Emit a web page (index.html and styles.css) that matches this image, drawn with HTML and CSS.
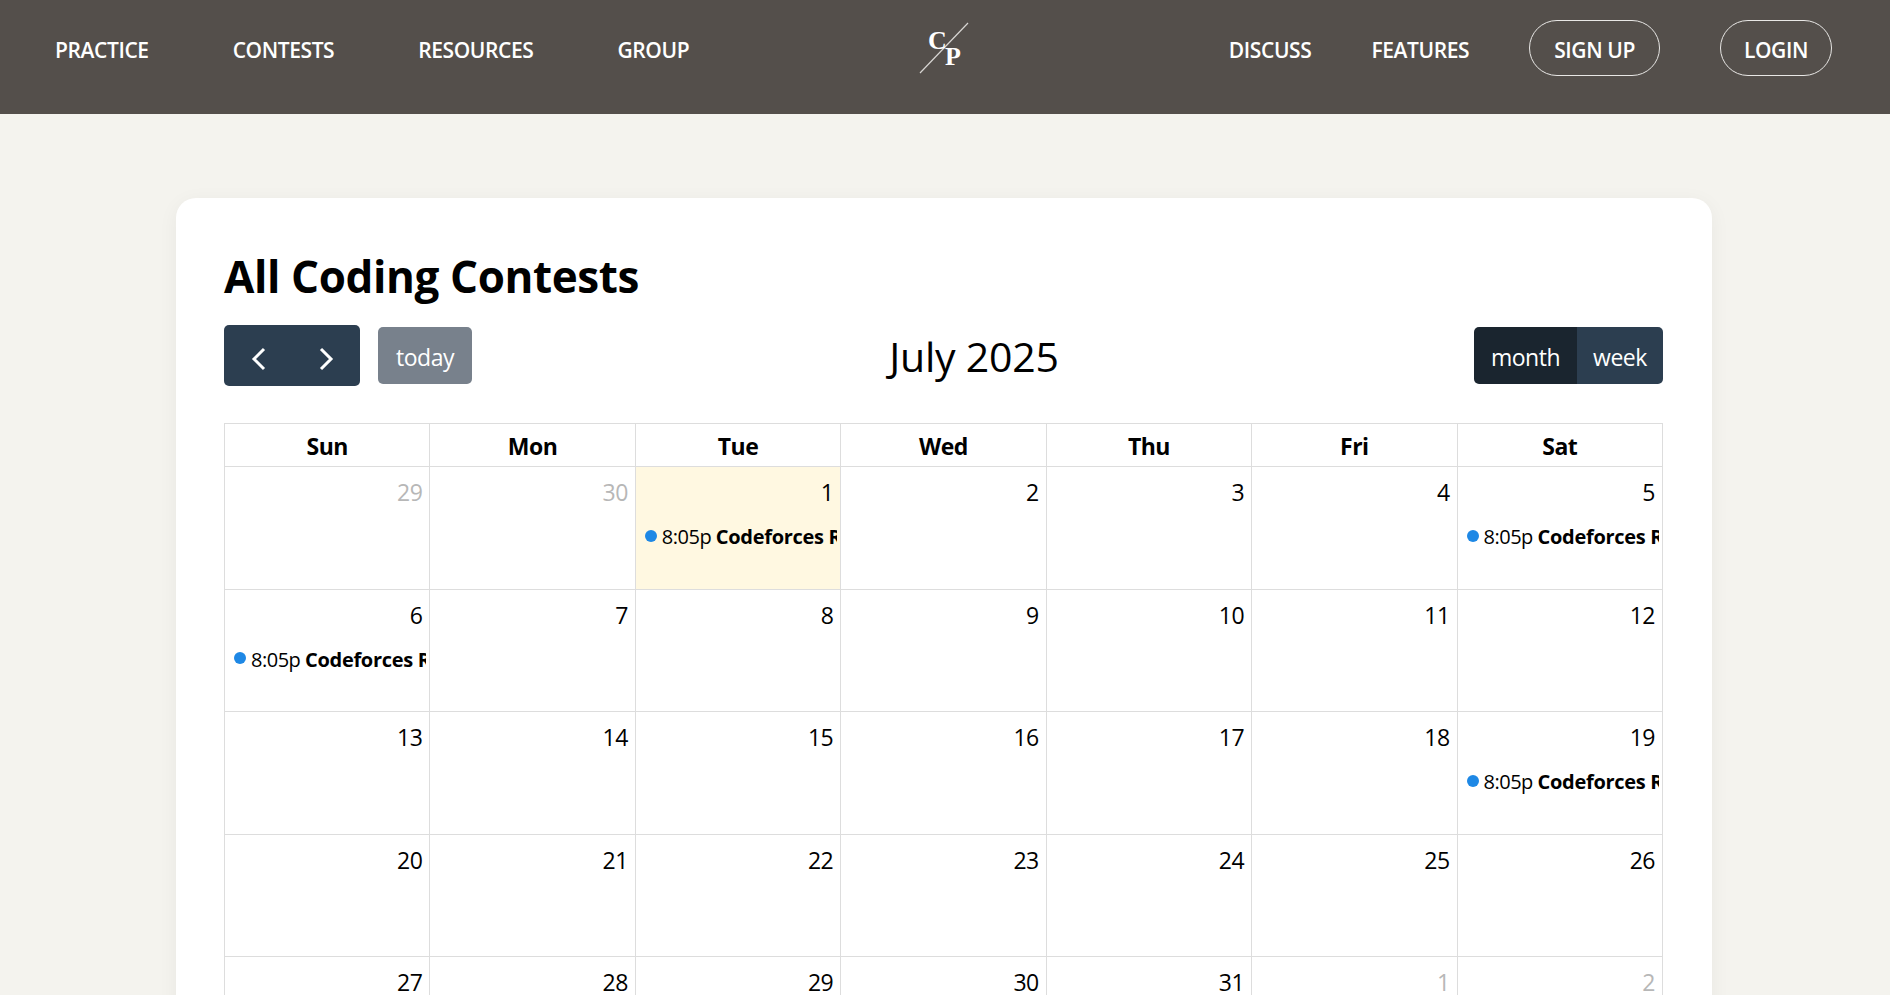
FILE: index.html
```html
<!DOCTYPE html>
<html lang="en">
<head>
    <meta charset="UTF-8">
    <meta name="viewport" content="width=device-width, initial-scale=1.0">
    <title>All Coding Contests</title>
    <link rel="stylesheet" href="styles.css">
</head>
<body>
    <nav class="navbar">
        <div class="nav-left">
            <a class="nav-link" href="#">PRACTICE</a>
            <a class="nav-link" href="#">CONTESTS</a>
            <a class="nav-link" href="#">RESOURCES</a>
            <a class="nav-link" href="#">GROUP</a>
        </div>
        <a class="logo" href="#">
            <svg width="50" height="52" viewBox="0 0 50 52">
                <line x1="1" y1="51" x2="49" y2="1" stroke="#d8d6d3" stroke-width="1.2"/>
                <text x="9" y="27" class="logo-letter">C</text>
                <text x="26" y="43" class="logo-letter">P</text>
            </svg>
        </a>
        <div class="nav-right">
            <a class="nav-link" href="#">DISCUSS</a>
            <a class="nav-link" href="#">FEATURES</a>
            <a class="nav-link nav-pill" href="#">SIGN UP</a>
            <a class="nav-link nav-pill nav-pill-login" href="#">LOGIN</a>
        </div>
    </nav>

    <main class="page">
        <section class="card">
            <h1>All Coding Contests</h1>
            <div class="toolbar">
                <div class="toolbar-left">
                    <div class="btn-group">
                        <button class="btn btn-arrow" aria-label="prev">
                            <svg width="15" height="24" viewBox="0 0 15 24"><path d="M13 2 L3 12 L13 22" fill="none" stroke="#fff" stroke-width="3"/></svg>
                        </button>
                        <button class="btn btn-arrow" aria-label="next">
                            <svg width="15" height="24" viewBox="0 0 15 24"><path d="M2 2 L12 12 L2 22" fill="none" stroke="#fff" stroke-width="3"/></svg>
                        </button>
                    </div>
                    <button class="btn btn-today">today</button>
                </div>
                <h2 class="month-title">July 2025</h2>
                <div class="toolbar-right">
                    <button class="btn btn-view active">month</button>
                    <button class="btn btn-view">week</button>
                </div>
            </div>

            <div class="calendar">
                <div class="head">Sun</div>
                <div class="head">Mon</div>
                <div class="head">Tue</div>
                <div class="head">Wed</div>
                <div class="head">Thu</div>
                <div class="head">Fri</div>
                <div class="head">Sat</div>

                <div class="day other"><span class="num">29</span></div>
                <div class="day other"><span class="num">30</span></div>
                <div class="day today"><span class="num">1</span><div class="event"><i class="dot"></i>8:05p <b>Codeforces Round</b></div></div>
                <div class="day"><span class="num">2</span></div>
                <div class="day"><span class="num">3</span></div>
                <div class="day"><span class="num">4</span></div>
                <div class="day"><span class="num">5</span><div class="event"><i class="dot"></i>8:05p <b>Codeforces Round</b></div></div>

                <div class="day"><span class="num">6</span><div class="event"><i class="dot"></i>8:05p <b>Codeforces Round</b></div></div>
                <div class="day"><span class="num">7</span></div>
                <div class="day"><span class="num">8</span></div>
                <div class="day"><span class="num">9</span></div>
                <div class="day"><span class="num">10</span></div>
                <div class="day"><span class="num">11</span></div>
                <div class="day"><span class="num">12</span></div>

                <div class="day"><span class="num">13</span></div>
                <div class="day"><span class="num">14</span></div>
                <div class="day"><span class="num">15</span></div>
                <div class="day"><span class="num">16</span></div>
                <div class="day"><span class="num">17</span></div>
                <div class="day"><span class="num">18</span></div>
                <div class="day"><span class="num">19</span><div class="event"><i class="dot"></i>8:05p <b>Codeforces Round</b></div></div>

                <div class="day"><span class="num">20</span></div>
                <div class="day"><span class="num">21</span></div>
                <div class="day"><span class="num">22</span></div>
                <div class="day"><span class="num">23</span></div>
                <div class="day"><span class="num">24</span></div>
                <div class="day"><span class="num">25</span></div>
                <div class="day"><span class="num">26</span></div>

                <div class="day"><span class="num">27</span></div>
                <div class="day"><span class="num">28</span></div>
                <div class="day"><span class="num">29</span></div>
                <div class="day"><span class="num">30</span></div>
                <div class="day"><span class="num">31</span></div>
                <div class="day other"><span class="num">1</span></div>
                <div class="day other"><span class="num">2</span></div>
            </div>
        </section>
    </main>
</body>
</html>
```

FILE: styles.css
```css
body {
    font-family: 'Open Sans', 'Noto Sans', sans-serif;
    background-color: #f4f3ee;
    color: #000;
    margin: 0;
    padding: 0;
}

.navbar {
    display: grid;
    grid-template-columns: 1fr auto 1fr;
    align-items: center;
    box-sizing: border-box;
    height: 114px;
    padding: 0 58px 18px 55px;
    background-color: #544f4b;
}

.nav-left,
.nav-right {
    display: flex;
    align-items: center;
}

.nav-left {
    gap: 84px;
}

.nav-right {
    justify-content: flex-end;
    gap: 60px;
}

.nav-link {
    padding-top: 3px;
    color: #fff;
    font-size: 21px;
    font-weight: 600;
    letter-spacing: -0.4px;
    text-decoration: none;
}

.nav-pill {
    display: flex;
    align-items: center;
    box-sizing: border-box;
    height: 56px;
    padding: 3px 24px 0;
    border: 1px solid #e8e7e5;
    border-radius: 28px;
}

.nav-pill-login {
    padding: 3px 23px 0;
}

.logo {
    display: block;
    height: 52px;
}

.logo-letter {
    font-family: 'Liberation Serif', serif;
    font-size: 26px;
    font-weight: 700;
    fill: #fff;
}

.page {
    padding: 84px 178px 0 176px;
}

.card {
    padding: 48px 49px 48px 48px;
    background-color: #fff;
    border-radius: 20px;
    box-shadow: 0 4px 20px rgba(0, 0, 0, 0.05);
}

h1 {
    margin: 0;
    font-size: 44px;
    line-height: 60px;
    font-weight: 700;
    letter-spacing: -0.4px;
}

.toolbar {
    display: flex;
    justify-content: space-between;
    align-items: center;
    height: 61px;
    margin-top: 19px;
    margin-bottom: 37px;
}

.toolbar-left,
.toolbar-right {
    display: flex;
    align-items: center;
}

.toolbar-left {
    gap: 18px;
}

.btn {
    height: 57px;
    border: none;
    color: #fff;
    font-family: inherit;
    font-size: 23px;
    letter-spacing: -0.5px;
    background-color: #2c3e50;
}

.btn-group {
    display: flex;
    border-radius: 5px;
    overflow: hidden;
}

.btn-arrow {
    display: flex;
    align-items: center;
    justify-content: center;
    width: 68px;
    height: 61px;
    padding: 6px 0 0;
}

.btn-today {
    width: 94px;
    padding: 2px 0 0;
    border-radius: 5px;
    background-color: #78818c;
}

.month-title {
    margin: 0 0 0 2px;
    font-size: 41px;
    font-weight: 400;
    letter-spacing: -0.2px;
}

.btn-view {
    width: 86px;
    padding: 2px 0 0;
    border-radius: 0 5px 5px 0;
}

.btn-view.active {
    width: 103px;
    border-radius: 5px 0 0 5px;
    background-color: #1a252f;
}

.calendar {
    display: grid;
    grid-template-columns: repeat(7, 1fr);
    border-top: 1px solid #ddd;
    border-left: 1px solid #ddd;
}

.head {
    box-sizing: border-box;
    height: 43px;
    padding-top: 1px;
    border-right: 1px solid #ddd;
    border-bottom: 1px solid #ddd;
    font-size: 23px;
    font-weight: 700;
    line-height: 42px;
    letter-spacing: -0.5px;
    text-align: center;
}

.day {
    box-sizing: border-box;
    height: 122.5px;
    padding: 8px 7px 0 9px;
    border-right: 1px solid #ddd;
    border-bottom: 1px solid #ddd;
    overflow: hidden;
    font-size: 23px;
    text-align: right;
}

.num {
    display: block;
    height: 34px;
    line-height: 34px;
    letter-spacing: -0.5px;
}

.day.other .num {
    color: #b7b7b7;
}

.day.today {
    background-color: #fff8e1;
}

.event {
    display: flex;
    align-items: center;
    margin-top: 14px;
    margin-right: -4px;
    font-size: 20px;
    letter-spacing: -0.5px;
    white-space: pre;
    overflow: hidden;
    text-align: left;
}

.event b {
    letter-spacing: -0.3px;
}

.dot {
    flex: none;
    width: 12px;
    height: 12px;
    margin-right: 5px;
    margin-bottom: 2px;
    border-radius: 50%;
    background-color: #1e88e5;
}
```
